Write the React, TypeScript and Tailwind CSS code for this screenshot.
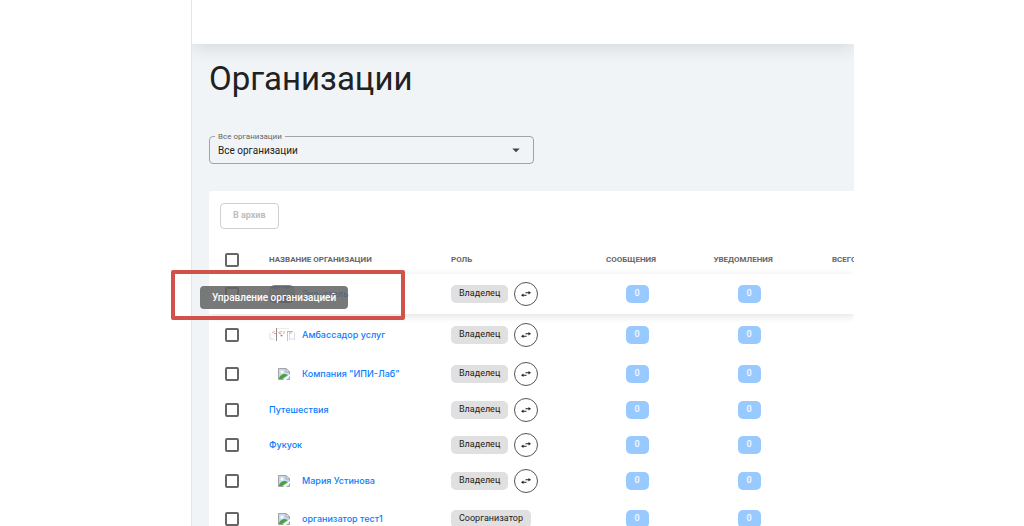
import React, { useState } from "react";
import { MdArrowDropDown } from "react-icons/md";
import clsx from "clsx";

type Organization = {
  name: string;
  role: string;
  height: string;
  picture?: "photo" | "map" | "broken";
  hovered?: boolean;
};

const organizations: Organization[] = [
  { name: "Эко-отель", role: "Владелец", height: "h-10", picture: "photo", hovered: true },
  { name: "Амбассадор услуг", role: "Владелец", height: "h-[42px]", picture: "map" },
  { name: 'Компания "ИПИ-Лаб"', role: "Владелец", height: "h-9", picture: "broken" },
  { name: "Путешествия", role: "Владелец", height: "h-9" },
  { name: "Фукуок", role: "Владелец", height: "h-[34px]" },
  { name: "Мария Устинова", role: "Владелец", height: "h-[38px]", picture: "broken" },
  { name: "организатор тест1", role: "Соорганизатор", height: "h-[38px]", picture: "broken" },
];

const Checkbox = ({ label }: { label: string }) => (
  <input
    type="checkbox"
    aria-label={label}
    className="block w-[14px] h-[14px] ml-4 border-2 rounded-xs appearance-none cursor-pointer border-[#666] checked:bg-[#666]"
  />
);

const Picture = ({ kind }: { kind: Organization["picture"] }) => {
  if (kind === "photo") {
    return (
      <svg width="26" height="18" viewBox="0 0 26 18" aria-hidden="true">
        <clipPath id="photo">
          <rect width="26" height="18" rx="6" />
        </clipPath>
        <g clipPath="url(#photo)">
          <rect width="26" height="18" fill="#c3c8d0" />
          <path d="M0 0h26v3l-4-1-4 2-5-2-5 2-8-1z" fill="#5f8cc4" />
          <path d="M0 12l8-3 7 2 11-2v10H0z" fill="#8b7064" />
        </g>
      </svg>
    );
  }
  if (kind === "map") {
    return (
      <svg width="26" height="16" viewBox="0 0 26 16" fill="none" aria-hidden="true">
        <path d="M7.500 1v13" stroke="#8f8f8f" />
        <path d="M8 1.500h12" stroke="#ececec" />
        <path d="M18.500 4v10" stroke="#c4c4cc" />
        <path d="M1 6v6h4M20.500 6v7M25.500 5v8M21 12h4" stroke="#d3dff0" />
        <path
          d="M3 6l3-2M5 6.500h2M9 5.500l4-1M10 6.500h2M15 4v3M18 4.500h6M20 6h3"
          stroke="#f79c9c"
        />
        <circle cx="12.500" cy="8.500" r="1" fill="#8a8a94" />
      </svg>
    );
  }
  return (
    <svg width="12" height="12" viewBox="0 0 12 12" className="ml-[9px]" aria-hidden="true">
      <path d="M.5.5h7.500l3.500 3.500v7.500H.5z" fill="#c9d9ef" stroke="#a3a3a3" />
      <path d="M8 .5V4h3.500z" fill="#fff" stroke="#a3a3a3" />
      <circle cx="4" cy="4" r="1.500" fill="#fff" />
      <path d="M1 11c0-3 3-5 6-5l3 1-6 4z" fill="#45a339" />
      <path d="M5 12l7-6v2l-4 4z" fill="#fff" />
    </svg>
  );
};

const SwapIcon = () => (
  <svg width="10" height="6" viewBox="0 0 10 6" fill="#222" aria-hidden="true">
    <path d="M4.500 1.200h3V0L10 1.700 7.500 3.400V2.200h-3z" />
    <path d="M5.500 3.800h-3V2.600L0 4.300 2.500 6V4.800h3z" />
  </svg>
);

const Counter = () => (
  <span className="flex items-center justify-center w-[23px] h-[18px] mx-auto text-[9px] font-medium text-white/90 rounded-[5px] bg-[#99caff]">
    0
  </span>
);

const App = () => {
  const [filter, setFilter] = useState("all");

  return (
    <div className="flex h-screen pl-[191px] pr-[170px] overflow-hidden bg-white font-['Roboto','Liberation_Sans',sans-serif] text-[#212121]">
      <div className="flex flex-col flex-1 min-w-0 border-l border-[#dfe6ee] bg-[#f0f4f7]">
        <header className="h-11 bg-white shadow-[0_4px_18px_rgba(0,0,0,0.11)] [clip-path:inset(0_0_-30px_0)] shrink-0" />
        <main className="flex flex-col flex-1 pl-[17px]">
          <h1 className="mt-3 text-[33px] leading-[46px]">Организации</h1>

          <fieldset className="relative w-[325px] h-8 mt-[30px] px-[5px] border rounded-sm border-[#a0a4a8]">
            <legend className="h-2 px-[3px] text-[8px] leading-[9px] text-[#666]">
              <label htmlFor="filter">Все организации</label>
            </legend>
            <select
              id="filter"
              value={filter}
              onChange={(e) => setFilter(e.target.value)}
              className="block w-full px-[3px] text-[10px] leading-[21px] bg-transparent appearance-none outline-none"
            >
              <option value="all">Все организации</option>
            </select>
            <MdArrowDropDown
              size={18}
              className="absolute right-2 top-px pointer-events-none text-[#444]"
            />
          </fieldset>

          <section className="relative flex-1 mt-[27px]">
            <div className="h-full pt-3 overflow-hidden bg-white rounded-tl-sm">
              <button
                type="button"
                disabled
                className="block px-3 ml-[11px] text-[9px] font-bold border rounded-sm h-[26px] border-[#d0d0d0] text-[#bdbdbd]"
              >
                В архив
              </button>

              <table className="w-full mt-4 text-left table-fixed">
                <colgroup>
                  <col className="w-[60px]" />
                  <col className="w-[182px]" />
                  <col className="w-[126px]" />
                  <col className="w-[120px]" />
                  <col className="w-[104px]" />
                  <col />
                </colgroup>
                <thead>
                  <tr className="h-[29px] text-[8px] text-[#666] whitespace-nowrap uppercase">
                    <th>
                      <Checkbox label="Выбрать все" />
                    </th>
                    <th className="font-bold">Название организации</th>
                    <th className="font-bold">Роль</th>
                    <th className="pr-3 font-bold text-center">Сообщения</th>
                    <th className="pr-3 font-bold text-center">Уведомления</th>
                    <th className="font-bold pl-[31px]">Всего</th>
                  </tr>
                </thead>
                <tbody>
                  {organizations.map((org) => (
                    <tr
                      key={org.name}
                      className={clsx(
                        org.height,
                        org.hovered && "shadow-[0_2px_8px_rgba(0,0,0,0.12)]"
                      )}
                    >
                      <td>
                        <Checkbox label={org.name} />
                      </td>
                      <td>
                        <a
                          href="#"
                          className="flex items-center font-['Inter','Liberation_Sans',sans-serif] text-[9px] font-medium text-[#0a7cff]"
                        >
                          {org.picture && (
                            <span className="flex w-[33px]">
                              <Picture kind={org.picture} />
                            </span>
                          )}
                          {org.name}
                        </a>
                      </td>
                      <td>
                        <div className="flex items-center gap-[6px]">
                          <span className="flex items-center h-[18px] px-2 text-[9px] rounded-[5px] bg-[#e0e0e0]">
                            {org.role}
                          </span>
                          {org.role === "Владелец" && (
                            <button
                              type="button"
                              aria-label="Сменить роль"
                              className="flex items-center justify-center w-6 h-6 border rounded-full border-[#555]"
                            >
                              <SwapIcon />
                            </button>
                          )}
                        </div>
                      </td>
                      <td>
                        <Counter />
                      </td>
                      <td>
                        <Counter />
                      </td>
                      <td />
                    </tr>
                  ))}
                </tbody>
              </table>
            </div>

            <div
              role="tooltip"
              className="absolute -left-[9px] top-[95px] px-3 rounded-sm bg-[#616161]/85 text-[10px] leading-[23px] font-medium text-white whitespace-nowrap"
            >
              Управление организацией
            </div>
            <div className="absolute -left-[38px] top-[79px] w-[234px] h-[50px] border-4 rounded-xs border-[#d05248] pointer-events-none" />
          </section>
        </main>
      </div>
    </div>
  );
};

export default App;
